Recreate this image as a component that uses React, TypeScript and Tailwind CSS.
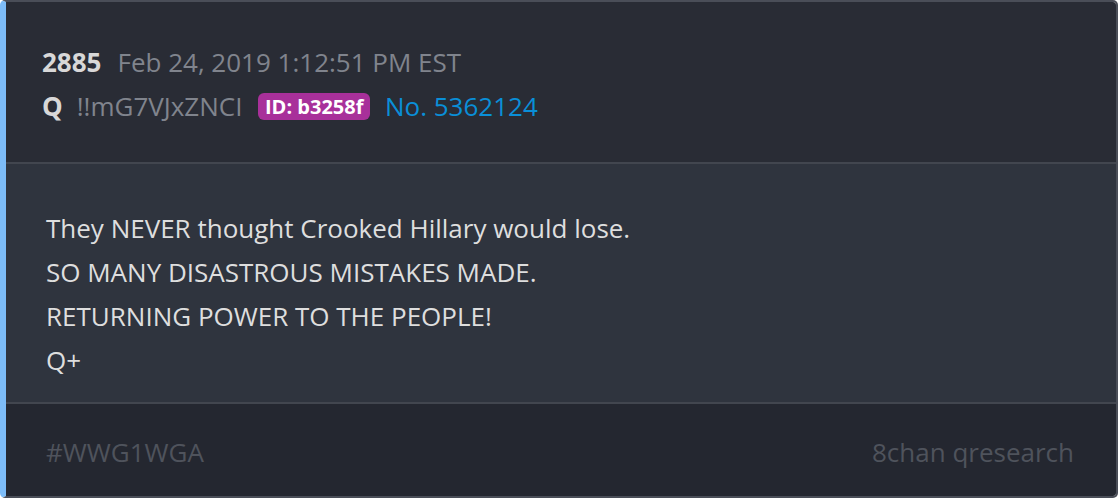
export default function App() {
  return (
    <div className="w-[1118px] h-[498px] bg-white" style={{ fontFamily: '"Open Sans", "Noto Sans", sans-serif' }}>
      <div className="flex flex-col h-[498px] rounded-[5px] overflow-hidden border-l-[6px] border-l-[#7dbcf7] border-t-2 border-t-[#4a4e58] border-r-2 border-r-[#4a4e58] border-b-2 border-b-[#4a4e58]">
        <div className="bg-[#292c35] h-[160px] pl-[36px] pt-[38px] flex flex-col">
          <div className="flex items-center h-[44px] text-[26px]">
            <span className="font-bold text-[#d8d8d8]">2885</span>
            <span className="ml-[16px] text-[#80848d]">Feb 24, 2019 1:12:51 PM EST</span>
          </div>
          <div className="flex items-center h-[44px] text-[26px]">
            <span className="font-bold text-[#d8d8d8]">Q</span>
            <span className="ml-[14px] text-[#80848d]">!!mG7VJxZNCI</span>
            <span className="ml-[16px] bg-[#a8309a] text-white font-bold text-[20px] leading-[27px] h-[27px] px-[6.5px] rounded-[6px]">ID: b3258f</span>
            <span className="ml-[15px] text-[#0a8fd8]">No. 5362124</span>
          </div>
        </div>
        <div className="h-[2px] bg-[#42464f]" />
        <div className="bg-[#2f343e] h-[238px] pl-[40px] pt-[42px] text-[26px] leading-[44px] text-[#dedede]">
          <div>They NEVER thought Crooked Hillary would lose.</div>
          <div>SO MANY DISASTROUS MISTAKES MADE.</div>
          <div>RETURNING POWER TO THE PEOPLE!</div>
          <div>Q+</div>
        </div>
        <div className="h-[2px] bg-[#42464f]" />
        <div className="bg-[#242730] flex-1 flex items-center justify-between pl-[40px] pr-[42px] pt-[4px] text-[26px] text-[#4f535c]">
          <span>#WWG1WGA</span>
          <span>8chan qresearch</span>
        </div>
      </div>
    </div>
  );
}
